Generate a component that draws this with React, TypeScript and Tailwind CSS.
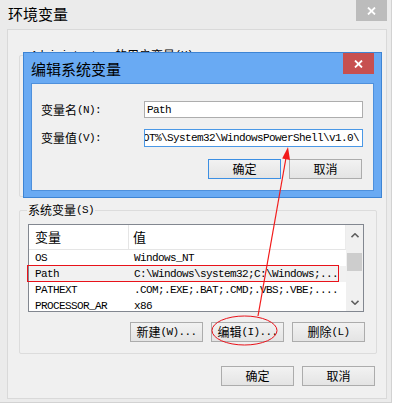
import React from 'react';

const cjk = "font-['Noto_Sans_CJK_SC',sans-serif]";
const mono = "font-['Liberation_Mono','Noto_Sans_CJK_SC',monospace] text-[11px] tracking-[-0.6px]";

// label like 变量名(N):  -> chinese part + monospace part
const Lbl = ({ zh, key1 }: { zh: string; key1: string }) => (
  <span className="flex items-center whitespace-nowrap leading-[16px]">
    <span className={`${cjk} text-[12px]`}>{zh}</span>
    <span className={mono}>{key1}</span>
  </span>
);

const Btn = ({ zh, tail, primary }: { zh: string; tail?: string; primary?: boolean }) => (
  <div
    className={`h-[20px] w-[73px] flex items-center justify-center border ${
      primary ? 'border-[#3c8fe3]' : 'border-[#acacac]'
    } bg-linear-to-b from-[#f2f2f2] to-[#e4e4e4]`}
  >
    <span className={`${cjk} text-[12px] leading-[16px] text-black`}>{zh}</span>
    {tail && <span className={`${mono} leading-[16px]`}>{tail}</span>}
  </div>
);

const CloseX = () => (
  <svg width="9" height="8" viewBox="0 0 9 8">
    <path d="M1 0.5 L8 7.5 M8 0.5 L1 7.5" stroke="white" strokeWidth="1.8" />
  </svg>
);

const Chevron = ({ down }: { down?: boolean }) => (
  <svg width="8" height="5" viewBox="0 0 8 5">
    <path d={down ? 'M0.5 0.8 L4 4.2 L7.5 0.8' : 'M0.5 4.2 L4 0.8 L7.5 4.2'} stroke="#606060" strokeWidth="1.6" fill="none" />
  </svg>
);

const rows = [
  ['OS', 'Windows_NT'],
  ['Path', 'C:\\Windows\\system32;C:\\Windows;...'],
  ['PATHEXT', '.COM;.EXE;.BAT;.CMD;.VBS;.VBE;....'],
  ['PROCESSOR_AR', 'x86'],
];

const App = () => {
  return (
    <div className="relative w-[394px] h-[406px] overflow-hidden bg-white text-black">
      {/* main window */}
      <div className="w-[392px] h-[403px] bg-[#ebebeb] border-r border-b border-[#d2d2d2] flex flex-col">
        <div className="h-[29px] flex justify-between items-start">
          <span className={`${cjk} text-[15px] leading-[20px] pl-[8px] pt-[4px]`}>环境变量</span>
          <div className="w-[31px] h-[21px] bg-[#bcbcbc] mr-[4px] flex items-center justify-center">
            <CloseX />
          </div>
        </div>

        <div className="ml-[7px] w-[380px] h-[370px] border border-[#d9d9d9] bg-[#f0f0f0] flex flex-col">
          {/* user vars group (mostly covered by the dialog) */}
          <div className="ml-[11px] mt-[25px] w-[358px] h-[142px] border border-[#dcdcdc] rounded-[2px]">
            <div className="-mt-[9px] ml-[9px] h-[16px] flex">
              <span className="bg-[#f0f0f0] px-[2px] flex">
                <span className={`${mono} leading-[16px]`}>Administrator&nbsp;</span>
                <Lbl zh="的用户变量" key1="(U)" />
              </span>
            </div>
          </div>

          {/* system vars group */}
          <div className="ml-[11px] mt-[13px] w-[358px] h-[144px] border border-[#dcdcdc] rounded-[2px] flex flex-col">
            <div className="-mt-[9px] ml-[7px] h-[16px] flex">
              <span className="bg-[#f0f0f0] px-[1px] flex">
                <Lbl zh="系统变量" key1="(S)" />
              </span>
            </div>
            <div className="ml-[8px] mt-[6px] w-[336px] h-[88px] border border-[#828790] bg-white flex overflow-hidden">
              <div className="w-[317px] flex flex-col">
                <div className="h-[25px] flex border-b border-[#e5e5e5] border-r border-r-[#ececec] shrink-0">
                  <div className={`${cjk} w-[100px] pl-[6px] text-[13px] leading-[24px] border-r border-[#e5e5e5]`}>变量</div>
                  <div className={`${cjk} pl-[4px] text-[13px] leading-[24px]`}>值</div>
                </div>
                {rows.map(([n, v]) => (
                  <div
                    key={n}
                    className={`h-[16px] flex shrink-0 items-center ${n === 'Path' ? 'bg-[#f1f1f1]' : ''}`}
                  >
                    <span className={`${mono} w-[105px] pl-[6px] whitespace-nowrap overflow-hidden`}>{n}</span>
                    <span className={`${mono} whitespace-nowrap`}>{v}</span>
                  </div>
                ))}
              </div>
              <div className="w-[17px] bg-[#f0f0f0] flex flex-col items-center">
                <div className="h-[18px] flex items-center justify-center pt-[2px]">
                  <Chevron />
                </div>
                <div className="mt-[10px] w-[15px] h-[18px] bg-[#cdcdcd]" />
                <div className="mt-auto h-[17px] flex items-center justify-center">
                  <Chevron down />
                </div>
              </div>
            </div>
            <div className="mt-[10px] pr-[11px] flex justify-end gap-[8px]">
              <Btn zh="新建" tail="(W)..." />
              <Btn zh="编辑" tail="(I)..." />
              <Btn zh="删除" tail="(L)" />
            </div>
          </div>

          <div className="mt-[12px] pr-[11px] flex justify-end gap-[8px]">
            <Btn zh="确定" />
            <Btn zh="取消" />
          </div>
        </div>
      </div>

      {/* edit dialog, overlapping the main window */}
      <div className="absolute left-[23px] top-[52px] w-[359px] h-[146px] border border-[#3d84d4] bg-[#69aaf3] px-[7px] flex flex-col">
        <div className="h-[30px] flex justify-between items-start shrink-0">
          <span className={`${cjk} text-[15px] leading-[20px] pt-[6px]`}>编辑系统变量</span>
          <div className="w-[31px] h-[21px] bg-[#c75050] flex items-center justify-center">
            <CloseX />
          </div>
        </div>
        <div className="h-[108px] border border-[#4e90dc] bg-[#f0f0f0] flex flex-col pl-[9px] pr-[10px]">
          <div className="mt-[17px] h-[17px] flex items-center">
            <div className="w-[103px]">
              <Lbl zh="变量名" key1="(N):" />
            </div>
            <div className="flex-1 h-[17px] border border-[#adadad] bg-white flex items-center pl-[2px]">
              <span className={`${mono} leading-[14px]`}>Path</span>
            </div>
          </div>
          <div className="mt-[11px] h-[18px] flex items-center">
            <div className="w-[103px]">
              <Lbl zh="变量值" key1="(V):" />
            </div>
            <div className="flex-1 h-[18px] border border-[#4a98e6] bg-white flex items-center justify-end pr-[3px] overflow-hidden">
              <span className={`${mono} leading-[14px] whitespace-nowrap`}>
                %SystemRoot%\system32;%SystemRoot%;%SystemRoot%\System32\Wbem;%SYSTEMROOT%\System32\WindowsPowerShell\v1.0\
              </span>
            </div>
          </div>
          <div className="mt-[12px] flex justify-end gap-[8px] pr-[1px]">
            <Btn zh="确定" primary />
            <Btn zh="取消" />
          </div>
        </div>
      </div>

      {/* red annotation */}
      <svg className="absolute inset-0 pointer-events-none" width="394" height="406" viewBox="0 0 394 406">
        <rect x="27.5" y="265.5" width="311" height="16" fill="none" stroke="#e8121a" strokeWidth="1" />
        <ellipse cx="244.5" cy="330.5" rx="32.5" ry="14.5" fill="none" stroke="#e8121a" strokeWidth="1" />
        <line x1="258" y1="316" x2="286.5" y2="155" stroke="#f21a1a" strokeWidth="1.2" />
        <polygon points="288,147 290,160 282.2,158.6" fill="#f21a1a" />
      </svg>
    </div>
  );
};

export default App;
